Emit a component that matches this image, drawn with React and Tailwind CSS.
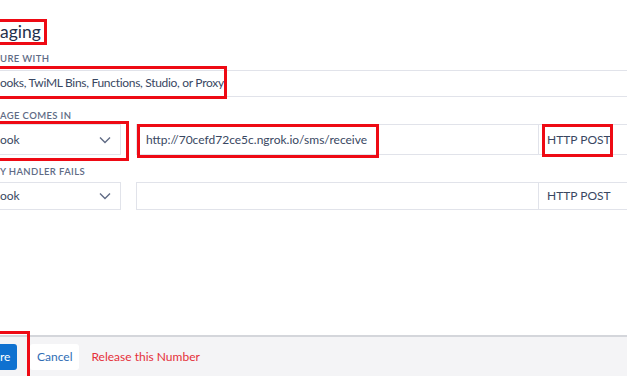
const Label = ({ children, className = "" }) => (
  <div className={`text-[9.5px] font-semibold uppercase tracking-[0.04em] text-[#606b85] leading-none ${className}`}>
    {children}
  </div>
);

const Chevron = () => (
  <svg width="12" height="8" viewBox="0 0 12 8" fill="none" stroke="#606b85" strokeWidth="1.4">
    <path d="M1 1.5l5 5 5-5" />
  </svg>
);

const Mark = ({ className }) => (
  <div className={`absolute border-[3px] border-[#ee0a14] pointer-events-none ${className}`} />
);

const App = () => {
  return (
    <div
      className="relative w-[627px] h-[376px] bg-white overflow-hidden text-[#394762] flex flex-col"
      style={{ fontFamily: "Lato, 'Open Sans', sans-serif" }}
    >
      <div className="flex-1 pt-[21px]">
        <h1 className="text-[17.5px] leading-[22px] text-[#1f304c] h-[22px]">aging</h1>

        <Label className="mt-[11px]">ure with</Label>
        <div className="mt-[6px] h-[27px] border-y border-[#e1e3ea] flex items-center text-[12px] tracking-[-0.3px]">
          ooks, TwiML Bins, Functions, Studio, or Proxy
        </div>

        <Label className="mt-[14px]">age comes in</Label>
        <div className="mt-[4px] flex h-[31px] text-[12px]">
          <div className="w-[121px] border border-l-0 border-[#e1e3ea] flex items-center justify-between pr-[9px]">
            <span>ook</span>
            <Chevron />
          </div>
          <div className="ml-[15px] w-[403px] border border-[#e1e3ea] flex items-center pl-[9px]">
            http://70cefd72ce5c.ngrok.io/sms/receive
          </div>
          <div className="flex-1 border-y border-[#e1e3ea] flex items-center pl-[8px]">HTTP POST</div>
        </div>

        <Label className="mt-[12px]">y handler fails</Label>
        <div className="mt-[5px] flex h-[28px] text-[12px]">
          <div className="w-[121px] border border-l-0 border-[#e1e3ea] flex items-center justify-between pr-[9px]">
            <span>ook</span>
            <Chevron />
          </div>
          <div className="ml-[15px] w-[403px] border border-[#e1e3ea]" />
          <div className="flex-1 border-y border-[#e1e3ea] flex items-center pl-[8px]">HTTP POST</div>
        </div>
      </div>

      <div className="h-[41px] border-t-2 border-[#d4d6db] bg-[#f4f4f6] flex items-center text-[12px]">
        <div className="h-[26px] w-[17px] bg-[#0f71d0] rounded-r-[3px] text-white flex items-center">re</div>
        <div className="ml-[13px] h-[26px] px-[7px] bg-white rounded-[3px] flex items-center text-[#2f6db5]">Cancel</div>
        <div className="ml-[12px] text-[#e5303a]">Release this Number</div>
      </div>

      <Mark className="left-[-3px] top-[19px] w-[50px] h-[26px]" />
      <Mark className="left-[-3px] top-[66px] w-[230px] h-[33px]" />
      <Mark className="left-[-3px] top-[121px] w-[132px] h-[40px]" />
      <Mark className="left-[137px] top-[124px] w-[242px] h-[34px]" />
      <Mark className="left-[542px] top-[124px] w-[71px] h-[33px]" />
      <Mark className="left-[-3px] top-[331px] w-[33px] h-[48px]" />
    </div>
  );
};

export default App;
